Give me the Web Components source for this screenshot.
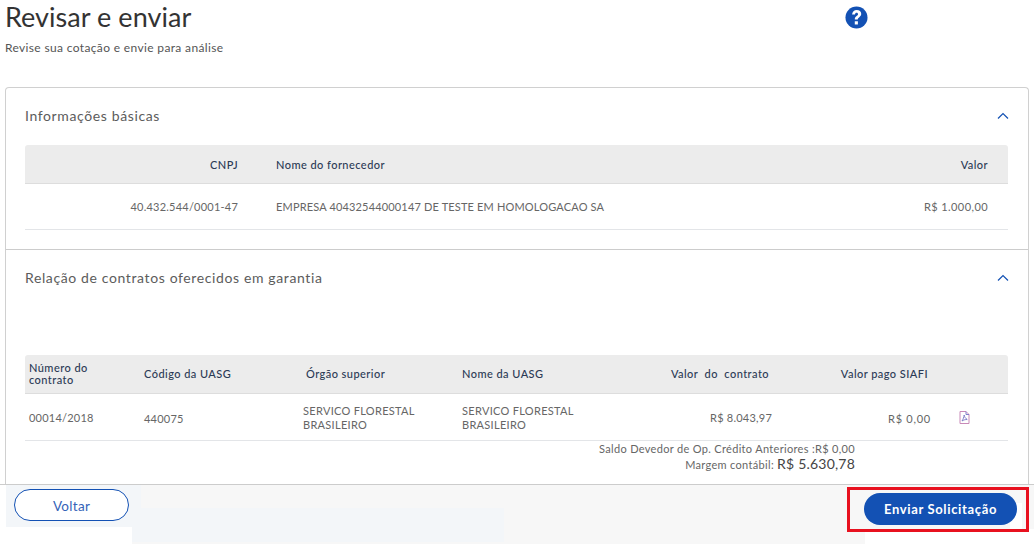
<!DOCTYPE html>
<html lang="pt-BR">
<head>
<meta charset="utf-8">
<title>Revisar e enviar</title>
<style>
  html, body { margin: 0; height: 100%; background: #fff; overflow: hidden; }
  body { font-family: "Lato", "Open Sans", sans-serif; color: #333; }
  #app { display: grid; grid-template-rows: 484px 60px; height: 544px; }
  #content { overflow: hidden; padding: 0 5px; display: flex; flex-direction: column; }
  section-card { flex: 1; }
</style>
</head>
<body>
<div id="app">
  <div id="content">
    <page-header heading="Revisar e enviar" sub="Revise sua cotação e envie para análise"></page-header>
    <section-card>
      <accordion-panel label="Informações básicas" style="--after-head:2px;height:161px">
        <supplier-table></supplier-table>
      </accordion-panel>
      <accordion-panel label="Relação de contratos oferecidos em garantia" divider style="--after-head:50px">
        <contracts-table></contracts-table>
        <totals-block></totals-block>
      </accordion-panel>
    </section-card>
  </div>
  <action-bar></action-bar>
</div>

<script>
  class PageHeader extends HTMLElement {
    connectedCallback() {
      this.attachShadow({ mode: 'open' });
      this.shadowRoot.innerHTML = `
        <style>
          :host { display: block; height: 87px; flex: none; }
          .top { display: flex; justify-content: space-between; padding-top: 1px; }
          h1 { margin: 0; font-size: 27px; line-height: 32px; font-weight: 400; color: #333; letter-spacing: .05px; }
          p { margin: 7px 0 0; font-size: 12px; line-height: 16px; color: #555; letter-spacing: .35px; }
          svg { width: 23px; height: 23px; margin: 5px 161px 0 0; display: block; }
        </style>
        <div class="top">
          <h1>${this.getAttribute('heading')}</h1>
          <svg viewBox="0 0 24 24" aria-hidden="true">
            <circle cx="12" cy="12" r="11.5" fill="#1351b4"/>
            <g transform="translate(12 12) scale(1.12) translate(-12 -12)" fill="#fff">
              <path d="M7.9 9.2C8 6.6 9.8 5 12.2 5c2.5 0 4.2 1.5 4.2 3.6 0 1.6-.8 2.5-2 3.3-1 .7-1.2 1-1.2 2H10.4c0-1.7.5-2.5 1.7-3.3.9-.6 1.3-1 1.3-1.7 0-.8-.5-1.3-1.3-1.3-.9 0-1.4.6-1.5 1.6z"/>
              <rect x="10.4" y="15.5" width="2.9" height="3"/>
            </g>
          </svg>
        </div>
        <p>${this.getAttribute('sub')}</p>`;
    }
  }

  class SectionCard extends HTMLElement {
    connectedCallback() {
      this.attachShadow({ mode: 'open' });
      this.shadowRoot.innerHTML = `
        <style>
          :host { display: block; border: 1px solid #d0d0d0; border-bottom: 0; border-radius: 4px 4px 0 0; background: #fff; }
        </style>
        <slot></slot>`;
    }
  }

  class AccordionPanel extends HTMLElement {
    connectedCallback() {
      this.attachShadow({ mode: 'open' });
      this.shadowRoot.innerHTML = `
        <style>
          :host { display: block; padding: 0 20px 0 19px; box-sizing: border-box; }
          :host([divider]) { border-top: 1px solid #ccc; }
          .head { display: flex; justify-content: space-between; align-items: center; height: 55px; margin-bottom: var(--after-head, 0); }
          h2 { margin: 0; font-size: 14px; font-weight: 400; color: #5c5c5c; letter-spacing: .62px; }
          svg { width: 12px; height: 8px; display: block; margin-right: -1px; }
        </style>
        <div class="head">
          <h2>${this.getAttribute('label')}</h2>
          <svg viewBox="0 0 12 8" fill="none" stroke="#1351b4" stroke-width="1.2"><path d="M1 6.5 6 1.5l5 5"/></svg>
        </div>
        <slot></slot>`;
    }
  }

  const tableStyle = `
    :host { display: block; font-size: 11px; }
    .row { display: grid; }
    .th { background: #ececec; border-bottom: 1px solid #ddd; border-radius: 3px 3px 0 0; color: #2b3a55; font-weight: 500; letter-spacing: .45px; }
    .td { border-bottom: 1px solid #e3e5e8; color: #666; letter-spacing: .22px; }
    .row > div { display: flex; align-items: center; box-sizing: border-box; min-width: 0; }
    .end { justify-content: flex-end; text-align: right; }
    .money { letter-spacing: .42px; }
  `;

  class SupplierTable extends HTMLElement {
    connectedCallback() {
      this.attachShadow({ mode: 'open' });
      this.shadowRoot.innerHTML = `
        <style>
          ${tableStyle}
          .row { grid-template-columns: 213px 38px 1fr 100px; }
          .th { height: 38px; }
          .td { height: 45px; }
          .row > .val { padding-right: 20px; white-space: nowrap; }
          .name { letter-spacing: .16px; }
        </style>
        <div class="row th"><div class="end">CNPJ</div><div></div><div>Nome do fornecedor</div><div class="end val">Valor</div></div>
        <div class="row td"><div class="end">40.432.544/0001-47</div><div></div><div class="name">EMPRESA 40432544000147 DE TESTE EM HOMOLOGACAO SA</div><div class="end val money">R$ 1.000,00</div></div>`;
    }
  }

  class ContractsTable extends HTMLElement {
    connectedCallback() {
      this.attachShadow({ mode: 'open' });
      const cols = '115px 159px 159px 150px 160px 159px 1fr';
      this.shadowRoot.innerHTML = `
        <style>
          ${tableStyle}
          .row { grid-template-columns: ${cols}; padding-left: 4px; }
          .th { height: 38px; line-height: 12px; }
          .td { height: 46px; line-height: 14px; }
          .th .org { padding-left: 3px; }
          .th .end { padding-right: 3px; }
          .td > div { padding-top: 2px; }
          .td > .low { padding-top: 3px; }
          .td > .org { letter-spacing: .3px; }
          .td > .icon { padding-top: 0; }
          .td > .wide { letter-spacing: .75px; }
          svg { width: 11px; height: 13px; margin-left: 28px; }
        </style>
        <div class="row th">
          <div>Número do<br>contrato</div>
          <div>Código da UASG</div>
          <div class="org">Órgão superior</div>
          <div>Nome da UASG</div>
          <div class="end">Valor&nbsp; do&nbsp; contrato</div>
          <div class="end">Valor pago SIAFI</div>
          <div></div>
        </div>
        <div class="row td">
          <div>00014/2018</div>
          <div class="low">440075</div>
          <div class="org">SERVICO FLORESTAL<br>BRASILEIRO</div>
          <div class="org">SERVICO FLORESTAL<br>BRASILEIRO</div>
          <div class="end">R$ 8.043,97</div>
          <div class="end low wide">R$ 0,00</div>
          <div class="icon"><svg viewBox="0 0 11 13" fill="none" stroke="#7f7fc8" stroke-width="1">
            <path d="M1 .5h6l3 3v9H1z" stroke="#c88ab8"/>
            <path d="M7 .5v3h3M3 10c1-1.5 2-4 2.2-6 .3 2 1.3 3.5 3 4.5-2 0-3.7.4-5.2 1.5z"/>
          </svg></div>
        </div>`;
    }
  }

  class TotalsBlock extends HTMLElement {
    connectedCallback() {
      this.attachShadow({ mode: 'open' });
      this.shadowRoot.innerHTML = `
        <style>
          :host { display: block; text-align: right; padding-right: 153px; font-size: 11px; color: #666; letter-spacing: .32px; line-height: 15px; }
          b { font-weight: 400; font-size: 14px; color: #444; letter-spacing: .2px; }
        </style>
        <div>Saldo Devedor de Op. Crédito Anteriores :R$ 0,00</div>
        <div>Margem contábil: <b>R$ 5.630,78</b></div>`;
    }
  }

  class ActionBar extends HTMLElement {
    connectedCallback() {
      this.attachShadow({ mode: 'open' });
      this.shadowRoot.innerHTML = `
        <style>
          :host { display: flex; justify-content: space-between; align-items: flex-start; position: relative; box-sizing: border-box; border-top: 1px solid #ccc; background: #f7f7f7; padding: 4px 17px 0 14px; overflow: hidden; }
          .patch { position: absolute; }
          .p1 { left: 0; top: 0; width: 6px; height: 21px; background: #fff; }
          .p2 { left: 6px; top: 0; width: 135px; height: 42px; background: #f3f6f9; }
          .p3 { left: 0; top: 21px; width: 6px; height: 40px; background: #fff; }
          .p4 { left: 6px; top: 42px; width: 126px; height: 20px; background: #fff; }
          .p5 { left: 132px; top: 23px; width: 372px; height: 34px; background: #f3f6f9; }
          .p6 { left: 865px; top: 44px; width: 169px; height: 16px; background: #fff; }
          .p7 { left: 1010px; top: 18px; width: 12px; height: 26px; background: #fff; }
          button { position: relative; height: 32px; border-radius: 16px; font: inherit; padding: 0; cursor: pointer; }
          .back { width: 115px; background: #fff; border: 1px solid #1351b4; color: #3563b8; font-size: 13.5px; letter-spacing: .3px; padding-top: 1px; }
          .send { width: 153px; margin-top: 4px; background: #1351b4; border: 0; color: #fff; font-size: 13px; font-weight: 700; letter-spacing: .65px; }
          .mark { position: absolute; left: 847px; top: 2px; width: 182px; height: 45px; box-sizing: border-box; border: 3px solid #e8111f; }
        </style>
        <i class="patch p1"></i><i class="patch p2"></i><i class="patch p3"></i><i class="patch p4"></i><i class="patch p5"></i><i class="patch p6"></i><i class="patch p7"></i>
        <button class="back">Voltar</button>
        <button class="send">Enviar Solicitação</button>
        <div class="mark"></div>`;
    }
  }

  customElements.define('page-header', PageHeader);
  customElements.define('section-card', SectionCard);
  customElements.define('accordion-panel', AccordionPanel);
  customElements.define('supplier-table', SupplierTable);
  customElements.define('contracts-table', ContractsTable);
  customElements.define('totals-block', TotalsBlock);
  customElements.define('action-bar', ActionBar);
</script>
</body>
</html>
